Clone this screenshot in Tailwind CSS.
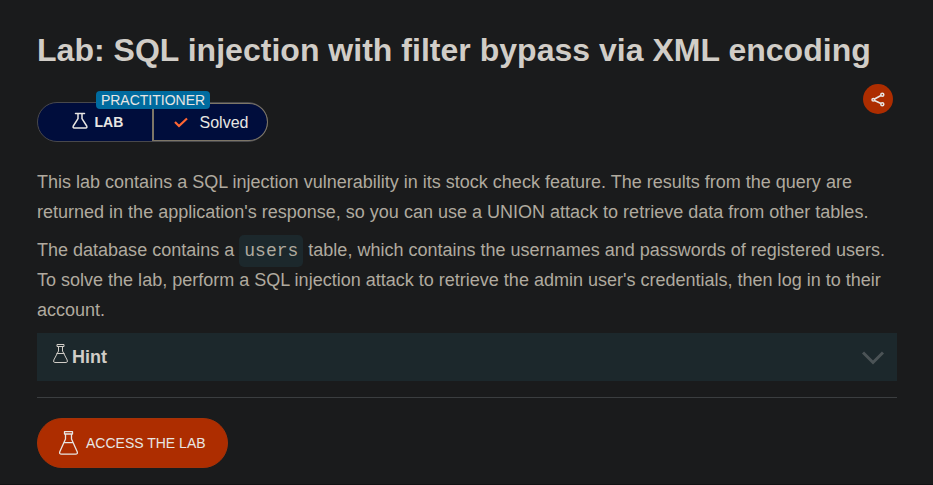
<!DOCTYPE html>
<html lang="en">
<head>
<meta charset="utf-8">
<title>Lab: SQL injection with filter bypass via XML encoding</title>
<script src="https://cdn.jsdelivr.net/npm/@tailwindcss/browser@4"></script>
</head>
<body class="h-[485px] overflow-hidden border-b border-[#111213] bg-[#1a1b1c] px-[37px] pt-[30px] font-['Liberation_Sans',Arial,sans-serif] text-[#b0aa9f]">
<main class="w-[860px]">
  <h1 class="h-10 text-[32px] leading-10 font-bold tracking-[0.02px] whitespace-nowrap text-[#d1cdc7]">Lab: SQL injection with filter bypass via XML encoding</h1>

  <div class="mt-[14px] flex h-[58px] items-start justify-between">
    <div class="relative mt-[18px] flex h-10 w-[231px] rounded-full border border-[#48484c] bg-[#000d3c] text-[#e8e6e3]">
      <div class="flex w-[114px] items-center pl-[34px]">
        <svg class="mb-[4px] h-[17px] w-4" viewBox="0 0 16 17" fill="none" stroke="currentColor" stroke-width="1.500" stroke-linejoin="round" stroke-linecap="round"><path d="M3.500 1.500h9M6 1.700v5L1.300 14q-.8 1.900 1 1.900h11.400q1.800 0 1-1.900L10 6.700v-5"/></svg>
        <span class="ml-[6.500px] text-sm font-bold">LAB</span>
      </div>
      <div class="-mr-px flex h-[38px] flex-1 items-center rounded-r-full border border-l-2 border-[#7d7667] pl-[20px]">
        <svg class="h-3 w-[14px] text-[#ff6633]" viewBox="0 0 14 12" fill="none" stroke="currentColor" stroke-width="2.200"><path d="M1 6l4 4 8-7.500"/></svg>
        <span class="ml-[11.500px] pt-[2px] text-base">Solved</span>
      </div>
      <span class="absolute top-[-12px] left-[58px] h-[18px] w-[114px] rounded bg-[#006b9f] text-center text-sm leading-[18px]">PRACTITIONER</span>
    </div>
    <button aria-label="Share" class="mr-1 flex size-[30px] items-center justify-center rounded-full bg-[#ad2d00] text-[#e8e6e3]">
      <svg class="h-[15px] w-[14px]" viewBox="0 0 14 15" fill="none" stroke="currentColor" stroke-width="1.500"><path d="M3.500 7L10 3.500M3.500 8.500L10 11.500"/><circle cx="2.300" cy="7.700" r="1.300"/><circle cx="11.300" cy="2.800" r="1.500"/><circle cx="11.300" cy="12.300" r="1.500"/></svg>
    </button>
  </div>

  <p class="mt-[25px] text-lg leading-[30px] tracking-[0.005px] whitespace-nowrap">This lab contains a SQL injection vulnerability in its stock check feature. The results from the query are<br>returned in the application's response, so you can use a UNION attack to retrieve data from other tables.</p>
  <p class="mt-2 text-lg leading-[30px] tracking-[0.005px] whitespace-nowrap">The database contains a <code class="rounded-[5px] bg-[#1c282c] px-[5px] py-[6px] font-['Courier_10_Pitch','Liberation_Mono',monospace] text-lg leading-none">users</code> table, which contains the usernames and passwords of registered users.<br>To solve the lab, perform a SQL injection attack to retrieve the admin user's credentials, then log in to their<br>account.</p>

  <div class="mt-2 flex h-12 items-center bg-[#1c282c] pr-[13px] pl-4 text-[#d1cdc7]">
    <svg class="mb-[7px] h-[19px] w-[15px]" viewBox="0 0 15 19" fill="none" stroke="currentColor" stroke-width="1" stroke-linejoin="round"><path d="M4 .5h7v2H4zM5.500 2.500v4.500L.8 16q-.8 2.500 1 2.500h11.400q1.800 0 1-2.500L9.500 7V2.500M3.500 9.500h8"/></svg>
    <span class="ml-1 text-lg font-bold">Hint</span>
    <svg class="ml-auto mt-px h-[14px] w-[22px] text-[#4b5356]" viewBox="0 0 22 14" fill="none" stroke="currentColor" stroke-width="3"><path d="M1 1.500l10 10 10-10"/></svg>
  </div>
  <hr class="mt-4 border-[#3b3e40]">
  <button class="mt-5 flex h-[50px] w-[191px] items-center rounded-full border border-[#a53207] bg-[#ad2d00] pl-[21px] text-[#e8e6e3]">
    <svg class="h-6 w-[19px]" viewBox="0 0 19 24" fill="none" stroke="currentColor" stroke-width="1.300" stroke-linejoin="round"><path d="M5.500.7h8v2.300h-8zM6.500 3v5L.9 20.500q-1 2.700 1.600 2.700h14q2.600 0 1.600-2.700L12.500 8V3M5 11.700h9"/></svg>
    <span class="ml-2 text-sm">ACCESS THE LAB</span>
  </button>
</main>
</body>
</html>
